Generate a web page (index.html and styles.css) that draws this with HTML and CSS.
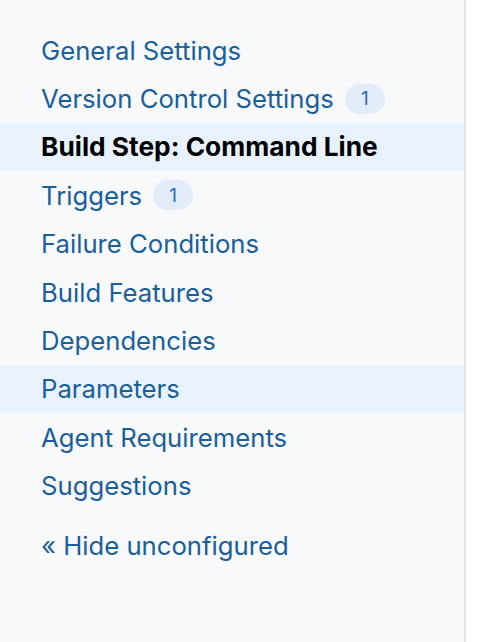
FILE: index.html
```html
<!DOCTYPE html>
<html>
<head>
<meta charset="utf-8">
<link rel="stylesheet" href="styles.css">
</head>
<body>
<nav class="sidebar">
  <ul class="menu">
    <li class="item"><a class="link" href="#">General Settings</a></li>
    <li class="item"><a class="link" href="#">Version Control Settings</a><span class="badge">1</span></li>
    <li class="item item--active"><span class="current">Build Step: Command Line</span></li>
    <li class="item"><a class="link" href="#">Triggers</a><span class="badge">1</span></li>
    <li class="item"><a class="link" href="#">Failure Conditions</a></li>
    <li class="item"><a class="link" href="#">Build Features</a></li>
    <li class="item"><a class="link" href="#">Dependencies</a></li>
    <li class="item item--hover"><a class="link" href="#">Parameters</a></li>
    <li class="item"><a class="link" href="#">Agent Requirements</a></li>
    <li class="item"><a class="link" href="#">Suggestions</a></li>
  </ul>
  <a class="toggle" href="#">« Hide unconfigured</a>
</nav>
</body>
</html>
```

FILE: styles.css
```css
html, body {
  margin: 0;
  padding: 0;
  background: #ffffff;
}
body {
  font-family: Inter, "Noto Sans", sans-serif;
  height: 642px;
  overflow: hidden;
}
.sidebar {
  width: 466px;
  height: 642px;
  box-sizing: border-box;
  background: #f7f9fb;
  border-right: 2px solid #dfe4eb;
  padding-top: 26px;
}
.menu {
  list-style: none;
  margin: 0;
  padding: 0;
}
.item {
  display: flex;
  align-items: center;
  height: 48.4px;
  padding-left: 41px;
  font-size: 25.7px;
}
.item--active,
.item--hover {
  background: #e8f2fd;
}
.link {
  color: #1a5e9a;
  text-decoration: none;
}
.current {
  color: #000000;
  font-weight: 700;
  font-size: 26.3px;
}
.badge {
  display: inline-flex;
  align-items: center;
  justify-content: center;
  margin-left: 11px;
  width: 40px;
  height: 30px;
  border-radius: 15px;
  background: #e2ecf8;
  color: #2c6cb4;
  font-size: 19px;
}
.toggle {
  display: block;
  margin-top: 12px;
  padding-left: 41px;
  height: 48px;
  line-height: 48px;
  font-size: 25.7px;
  color: #1a5e9a;
  text-decoration: none;
}
```
